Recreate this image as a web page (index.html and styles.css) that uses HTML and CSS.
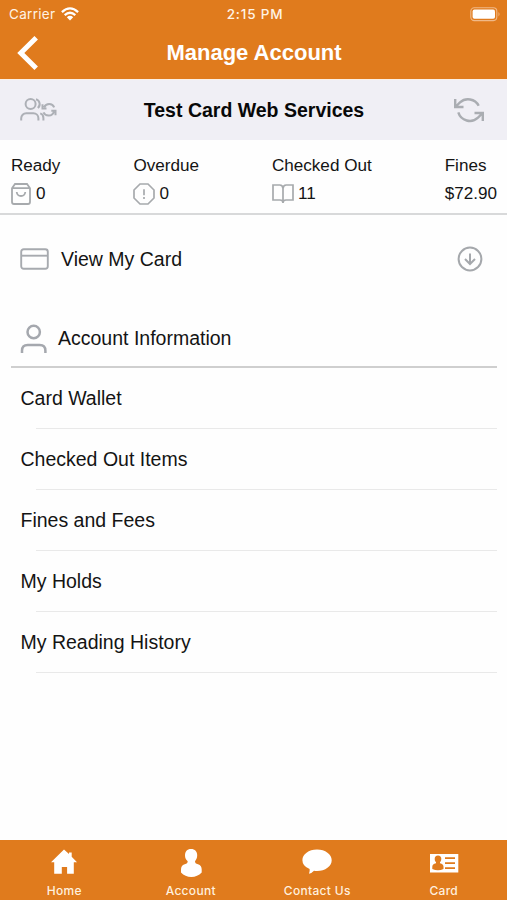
FILE: index.html
```html
<!DOCTYPE html>
<html lang="en">
<head>
<meta charset="utf-8">
<title>Manage Account</title>
<link rel="stylesheet" href="styles.css">
</head>
<body>
<header class="top">
  <div class="status">
    <div class="carrier"><span>Carrier</span>
      <svg width="18" height="14" viewBox="0 0 18 14" fill="none" stroke="#fff" stroke-width="2.3"><path d="M.9 5.1Q9-2.3 17.1 5.1M3.7 8.1Q9 3.3 14.3 8.1"/><path d="M5.8 10.2Q9 7.4 12.2 10.2L9 13.6z" fill="#fff" stroke="none"/></svg>
    </div>
    <span class="time">2:15 PM</span>
    <svg class="battery" width="31" height="15" viewBox="0 0 31 15"><rect x=".8" y=".8" width="26" height="12.8" rx="3.5" fill="none" stroke="#f0b988" stroke-width="1.1"/><rect x="2.6" y="2.6" width="22.4" height="9.2" rx="1.8" fill="#fff"/><path d="M28.5 5q2 2.2 0 4.4z" fill="#f0b988"/></svg>
  </div>
  <div class="nav">
    <svg class="back" width="22" height="36" viewBox="0 0 22 36" fill="none" stroke="#fff" stroke-width="5"><path d="M20.2 2.8 4.8 18l15.4 15.2"/></svg>
    <h1>Manage Account</h1>
  </div>
</header>
<section class="holder">
  <svg width="38" height="24" viewBox="0 0 38 24" fill="none" stroke="#adb0b6" stroke-width="2"><circle cx="10.6" cy="6" r="5"/><path d="M1.2 22.500v-2.200a5 5 0 0 1 5-5h7.200a5 5 0 0 1 5 5v2.200M16 1.300a5 5 0 0 1 1.800 8.700M20.200 15.400q3.200.8 3.200 4.600v2.600"/><path d="M34.200 9.400a5.500 5.500 0 0 0-10-.2M23.500 14.300a5.600 5.600 0 0 0 10.400-.6M22.500 6.200v4.200h4M35.500 17.200v-4.400h-4.200"/></svg>
  <h2>Test Card Web Services</h2>
  <svg width="32" height="26" viewBox="0 0 32 26" fill="none" stroke="#aaadb2" stroke-width="2.4"><path d="M2.200 2v8h8.300M2.800 9.500 7 5.400a12 12 0 0 1 18.700 3.300M29.800 24v-8h-8.300M29.200 16.500 25 20.600A12 12 0 0 1 5.300 15.400"/></svg>
</section>
<section class="stats">
  <div><span>Ready</span>
    <div class="value"><svg width="20" height="22" viewBox="0 0 20 22" fill="none" stroke="#a7aaad" stroke-width="1.800"><path d="M1 5.200 4 1h12l3 4.200V19q0 2-2 2H3q-2 0-2-2zM1 5.200h18M5.700 9q.5 4 4.300 4t4.300-4"/></svg><b>0</b></div></div>
  <div><span>Overdue</span>
    <div class="value overdue"><svg width="22" height="22" viewBox="0 0 22 22" fill="none" stroke="#a7aaad" stroke-width="1.700"><path d="M7 1h8l6 6v8l-6 6H7l-6-6V7zM11 6.200v6M11 14v2"/></svg><b>0</b></div></div>
  <div><span>Checked Out</span>
    <div class="value book"><svg width="22" height="20" viewBox="0 0 22 20" fill="none" stroke="#a7aaad" stroke-width="1.700"><path d="M11 4.300Q10.700 1 7.800 1H1v15h7q3 0 3 3 0-3 3-3h7V1h-6.800Q11.300 1 11 4.300V19"/></svg><b>11</b></div></div>
  <div><span>Fines</span><div class="value"><b>$72.90</b></div></div>
</section>
<section class="card-link">
  <svg width="29" height="22" viewBox="0 0 29 22" fill="none" stroke="#a7aaaf" stroke-width="1.900"><rect x="1.200" y="1.200" width="26.600" height="19.500" rx="2.500"/><path d="M1.200 7.700h26.600"/></svg>
  <span>View My Card</span>
  <svg width="26" height="26" viewBox="0 0 26 26" fill="none" stroke="#a5a8ac" stroke-width="2"><circle cx="13" cy="13" r="11.400"/><path d="M13 7.600v10.200M8 13l5 5 5-5"/></svg>
</section>
<section class="info">
  <svg width="28" height="30" viewBox="0 0 28 30" fill="none" stroke="#a5a8ae" stroke-width="2.500"><circle cx="13.700" cy="8" r="6.200"/><path d="M2 29v-2.300q0-5.700 5.700-5.700h12q5.700 0 5.700 5.700V29"/></svg>
  <span>Account Information</span>
</section>
<ul class="menu">
  <li>Card Wallet</li>
  <li>Checked Out Items</li>
  <li>Fines and Fees</li>
  <li>My Holds</li>
  <li>My Reading History</li>
</ul>
<nav class="tabs">
  <div><svg width="30" height="30" viewBox="0 0 30 30" fill="#fff"><path d="M15 2.500 20 7V5.500h2.700v4.200L28 15.200h-3.200v11.600h-6.700v-6.700h-5.300v6.700H5.200V15.200H2z"/></svg><span>Home</span></div>
  <div><svg width="30" height="30" viewBox="0 0 30 30" fill="#fff"><path d="M15 2c4 0 6.200 2.700 6.200 6.200 0 3-1 4.500-2.200 6 0 1.700.8 2.300 3 3 2.700.8 3.700 2.600 3.700 5.200v3.200Q21.500 30 15.300 30T5 25.600v-3.200c0-2.600 1-4.400 3.700-5.200 2.200-.7 3-1.300 3-3C10 12.700 9 11.200 9 8.200 9 4.700 11 2 15 2z"/></svg><span>Account</span></div>
  <div><svg width="30" height="30" viewBox="0 0 30 30" fill="#fff"><path d="M15 2.500c8.300 0 14.700 4.800 14.700 10.700S23.300 24 15 24q-1.600 0-3-.3-2.300 2.500-5 3 1-2.200.6-4.600Q.4 19 .4 13.200C.4 7.300 6.700 2.500 15 2.500z"/></svg><span>Contact Us</span></div>
  <div><svg width="30" height="30" viewBox="0 0 30 30"><rect x="1" y="7" width="28.300" height="18.500" fill="#fff"/><g fill="#e07b1d"><ellipse cx="9" cy="12" rx="3.300" ry="3.600"/><path d="M7 13h4v3.300q3.500.7 3.500 3.400v2.200Q9 24.800 3.300 21.900v-2.200q0-2.700 3.700-3.400z"/><path d="M16 10.300h10v1.800H16zM16 15.200h10V17H16zM16 20.300h10v1.800H16z"/></g></svg><span>Card</span></div>
</nav>
</body>
</html>
```
FILE: styles.css
```css
* { box-sizing: border-box; }
body {
  margin: 0;
  height: 900px;
  display: flex;
  flex-direction: column;
  background: #fefefe;
  color: #141414;
  font-family: "Liberation Sans", Arial, sans-serif;
}
svg { display: block; flex: none; }
.top { height: 79px; background: #e07b1d; color: #fff; }
.status {
  height: 27px;
  display: grid;
  grid-template-columns: 1fr auto 1fr;
  align-items: center;
  padding: 0 6px 0 9px;
  font: 500 13.5px/28px Inter, sans-serif;
  color: #fff3e5;
}
.carrier { display: flex; align-items: center; gap: 6px; font-weight: 400; letter-spacing: .3px; }
.carrier svg { margin-top: -1px; }
.time { letter-spacing: .8px; }
.battery { justify-self: end; }
.nav {
  height: 52px;
  display: grid;
  grid-template-columns: 40px 1fr 40px;
  align-items: center;
  padding: 0 15px 0 16px;
}
h1 { margin: 0; text-align: center; font-size: 22px; line-height: 50px; }
.holder {
  height: 61px;
  padding: 0 22px 0 20px;
  display: flex;
  align-items: center;
  justify-content: space-between;
  background: #f0eff5;
  border-top: 1px solid #fbefe4;
}
h2 { margin: 0 3px 0 0; font-size: 19.5px; color: #080808; }
.stats {
  height: 75px;
  padding: 14px 10px 0 11px;
  display: flex;
  justify-content: space-between;
  border-bottom: 2px solid #d8d9da;
  font-size: 17.1px;
  line-height: 23px;
}
.value { display: flex; align-items: center; gap: 5px; height: 33px; }
.value b { font-weight: 400; }
.overdue, .book { gap: 4px; }
.card-link {
  height: 88px;
  padding: 0 24px 0 20px;
  display: flex;
  align-items: center;
  font-size: 19.5px;
}
.card-link span { flex: 1; margin-left: 12px; }
.info {
  height: 65px;
  margin: 0 10px 0 11px;
  padding: 8px 0 0 9px;
  display: flex;
  align-items: center;
  gap: 10px;
  border-bottom: 2px solid #cfcfcf;
  font-size: 19.5px;
}
.menu { margin: 0; padding: 0; list-style: none; }
.menu li {
  height: 61px;
  padding-left: 20.5px;
  font-size: 19.5px;
  line-height: 60px;
  background: linear-gradient(#e9e9e9, #e9e9e9) 36px 100% / 461px 1px no-repeat;
}
.tabs {
  height: 60px;
  margin-top: auto;
  padding-left: 1px;
  display: grid;
  grid-template-columns: repeat(4, 1fr);
  background: #e07b1d;
  color: #fff0df;
  font: 500 12px/14px Inter, sans-serif;
}
.tabs div { display: flex; flex-direction: column; align-items: center; padding-top: 7px; }
.tabs span { margin-top: 7px; letter-spacing: .3px; }
```
